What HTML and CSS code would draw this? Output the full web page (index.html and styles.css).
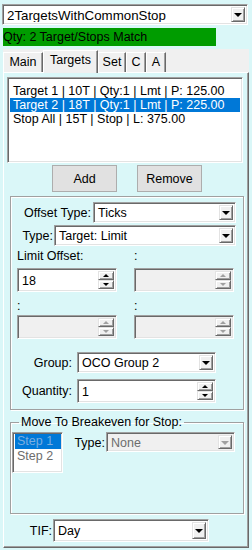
FILE: index.html
```html
<!DOCTYPE html>
<html>
<head>
<meta charset="utf-8">
<link rel="stylesheet" href="styles.css">
</head>
<body>
<div class="app">
  <div class="combo top-combo"><span class="val">2TargetsWithCommonStop</span><span class="drop"><i class="arr"></i></span></div>
  <div class="status">Qty: 2 Target/Stops Match</div>
  <div class="tabctl">
    <div class="tabstrip">
      <div class="tab t-main">Main</div>
      <div class="tab t-targets active">Targets</div>
      <div class="tab t-set">Set</div>
      <div class="tab t-c">C</div>
      <div class="tab t-a">A</div>
    </div>
    <div class="panel">
      <div class="listbox targets-list">
        <div class="item">Target 1 | 10T | Qty:1 | Lmt | P: 125.00</div>
        <div class="item sel">Target 2 | 18T | Qty:1 | Lmt | P: 225.00</div>
        <div class="item">Stop All | 15T | Stop | L: 375.00</div>
      </div>
      <div class="btnrow">
        <button class="btn">Add</button>
        <button class="btn">Remove</button>
      </div>
      <div class="group g1">
        <div class="row r-offset">
          <span class="lbl">Offset Type:</span>
          <div class="combo"><span class="val">Ticks</span><span class="drop"><i class="arr"></i></span></div>
        </div>
        <div class="row r-type">
          <span class="lbl">Type:</span>
          <div class="combo"><span class="val">Target: Limit</span><span class="drop"><i class="arr"></i></span></div>
        </div>
        <div class="spin-grid">
          <div class="field">
            <div class="flabel">Limit Offset:</div>
            <div class="spin"><span class="val">18</span><span class="sbtns"><span class="sb"><i class="up"></i></span><span class="sb"><i class="dn"></i></span></span></div>
          </div>
          <div class="field">
            <div class="flabel">:</div>
            <div class="spin disabled"><span class="val"></span><span class="sbtns"><span class="sb"><i class="up"></i></span><span class="sb"><i class="dn"></i></span></span></div>
          </div>
          <div class="field">
            <div class="flabel">:</div>
            <div class="spin disabled"><span class="val"></span><span class="sbtns"><span class="sb"><i class="up"></i></span><span class="sb"><i class="dn"></i></span></span></div>
          </div>
          <div class="field">
            <div class="flabel">:</div>
            <div class="spin disabled"><span class="val"></span><span class="sbtns"><span class="sb"><i class="up"></i></span><span class="sb"><i class="dn"></i></span></span></div>
          </div>
        </div>
        <div class="row r-group">
          <span class="lbl">Group:</span>
          <div class="combo"><span class="val">OCO Group 2</span><span class="drop"><i class="arr"></i></span></div>
        </div>
        <div class="row r-qty">
          <span class="lbl">Quantity:</span>
          <div class="spin"><span class="val">1</span><span class="sbtns"><span class="sb"><i class="up"></i></span><span class="sb"><i class="dn"></i></span></span></div>
        </div>
      </div>
      <fieldset class="group g2">
        <legend>Move To Breakeven for Stop:</legend>
        <div class="be-row">
          <div class="listbox steps">
            <div class="item sel dis">Step 1</div>
            <div class="item dis">Step 2</div>
          </div>
          <span class="lbl">Type:</span>
          <div class="combo disabled"><span class="val">None</span><span class="drop"><i class="arr"></i></span></div>
        </div>
      </fieldset>
      <div class="row r-tif">
        <span class="lbl">TIF:</span>
        <div class="combo"><span class="val">Day</span><span class="drop"><i class="arr"></i></span></div>
      </div>
    </div>
  </div>
</div>
</body>
</html>
```
FILE: styles.css
```css
* { box-sizing: border-box; }
body {
  margin: 0;
  width: 252px;
  height: 550px;
  overflow: hidden;
  background: #daf7f8;
  font-family: "Liberation Sans", Arial, sans-serif;
  font-size: 12.5px;
  color: #000;
}
.app { padding-top: 4px; }

/* sunken field */
.combo, .spin, .listbox {
  background: #fff;
  border: 1px solid;
  border-color: #a0a0a0 #fff #fff #a0a0a0;
  box-shadow: inset 1px 1px 0 #696969, inset -1px -1px 0 #e3e3e3;
}
.combo {
  display: flex;
  align-items: stretch;
  height: 21px;
  padding: 2px;
}
.combo .val {
  flex: 1;
  padding-left: 2px;
  line-height: 17px;
  white-space: nowrap;
  overflow: hidden;
}
.drop, .sb {
  display: flex;
  align-items: center;
  justify-content: center;
  background: #f0f0f0;
  border: 1px solid;
  border-color: #e3e3e3 #696969 #696969 #e3e3e3;
  box-shadow: inset 1px 1px 0 #fff, inset -1px -1px 0 #a0a0a0;
}
.drop { width: 14px; }
.arr {
  width: 0; height: 0;
  border-left: 4px solid transparent;
  border-right: 4px solid transparent;
  border-top: 4px solid #000;
  margin-top: 1px;
}
.combo.disabled { background: #f0f0f0; }
.combo.disabled .val { color: #6d6d6d; }
.combo.disabled .arr { border-top-color: #a0a0a0; }

.top-combo {
  margin-left: 2px;
  width: 246px;
  font-size: 13.3px;
}
.status {
  margin: 3px 0 0 3px;
  width: 213px;
  height: 18px;
  line-height: 18px;
  background: #009c00;
  white-space: nowrap;
}

/* tabs */
.tabctl { margin: 3px 0 0 3px; width: 246px; }
.tabstrip {
  height: 23px;
  background: #f0f0f0;
  display: flex;
  align-items: flex-end;
}
.tab {
  height: 20px;
  line-height: 18px;
  text-align: center;
  background: #f0f0f0;
  border: 1px solid;
  border-bottom: 0;
  border-color: #fff #696969 transparent #fff;
  box-shadow: inset -1px 0 0 #a0a0a0;
  position: relative;
}
.t-main { width: 40px; }
.t-targets { width: 55px; }
.t-set { width: 28px; }
.t-c { width: 20px; }
.t-a { width: 20px; }
.tab.active {
  height: 23px;
  margin-bottom: -1px;
  z-index: 1;
  line-height: 19px;
}
.panel {
  height: 476px;
  background: #daf7f8;
  border: 1px solid;
  border-color: #fff #696969 #696969 #fff;
  box-shadow: inset -1px -1px 0 #a0a0a0;
}

/* list */
.listbox { overflow: hidden; }
.targets-list {
  margin: 4px 0 0 3px;
  width: 236px;
  height: 86px;
  padding: 6px 2px 2px 2px;
}
.item {
  line-height: 14px;
  padding-left: 3px;
  white-space: nowrap;
}
.item.sel { background: #0078d7; color: #fff; }
.item.dis { color: #6d6d6d; }
.item.sel.dis { color: #7aaee0; }

.btnrow {
  display: flex;
  gap: 20px;
  margin: 2px 0 0 48px;
}
.btn {
  width: 65px;
  height: 27px;
  padding: 0;
  background: #e1e1e1;
  border: 1px solid #adadad;
  font: inherit;
  color: #000;
}

/* groups */
.group {
  border: 1px solid #a0a0a0;
  box-shadow: inset 1px 1px 0 #fff, 1px 1px 0 #fff;
}
.g1 {
  margin: 4px 0 0 6px;
  width: 234px;
  height: 214px;
  padding-top: 5px;
}
.row { display: flex; align-items: center; }
.lbl { text-align: right; white-space: nowrap; }
.r-offset .lbl { width: 82px; padding-right: 2px; }
.r-offset .combo { width: 143px; }
.r-type { margin-top: 2px; }
.r-type .lbl { width: 43px; padding-right: 1px; }
.r-type .combo { width: 182px; }

.spin-grid {
  display: grid;
  grid-template-columns: 100px 100px;
  column-gap: 17px;
  row-gap: 4px;
  margin: 3px 0 0 6px;
}
.flabel { height: 19px; line-height: 14px; }
.spin-grid .field:nth-child(n+3) .flabel { padding-top: 3px; }
.spin {
  display: flex;
  height: 24px;
  padding: 2px;
}
.spin .val { flex: 1; line-height: 20px; padding-left: 2px; }
.sbtns { display: flex; flex-direction: column; width: 16px; }
.sb { flex: 1; }
.up, .dn {
  width: 0; height: 0;
  border-left: 3px solid transparent;
  border-right: 3px solid transparent;
}
.up { border-bottom: 3px solid #000; }
.dn { border-top: 3px solid #000; }
.spin.disabled { background: #f0f0f0; }
.spin.disabled .up { border-bottom-color: #a0a0a0; }
.spin.disabled .dn { border-top-color: #a0a0a0; }

.r-group { margin-top: 13px; }
.r-group .lbl, .r-qty .lbl { width: 66px; padding-right: 5px; }
.r-group .combo { width: 139px; }
.r-qty { margin-top: 6px; }
.r-qty .spin { width: 139px; }

fieldset.g2 {
  margin: 5px 0 0 6px;
  width: 234px;
  height: 99px;
  padding: 0;
  min-inline-size: 0;
}
.g2 legend {
  margin-left: 8px;
  padding: 0 2px;
  line-height: 14px;
}
.be-row {
  display: flex;
  align-items: flex-start;
  margin: 3px 0 0 1px;
}
.steps {
  width: 51px;
  height: 41px;
  padding: 1px 1px 1px 2px;
}
.steps .item { line-height: 15px; padding-left: 2px; }
.be-row .lbl { width: 43px; padding-right: 1px; margin-top: 4px; }
.be-row .combo { width: 129px; height: 20px; }

.r-tif { margin-top: 5px; }
.r-tif .lbl { width: 49px; padding-right: 1px; }
.r-tif .combo { width: 156px; height: 23px; }
.r-tif .combo .val { line-height: 19px; }
```
